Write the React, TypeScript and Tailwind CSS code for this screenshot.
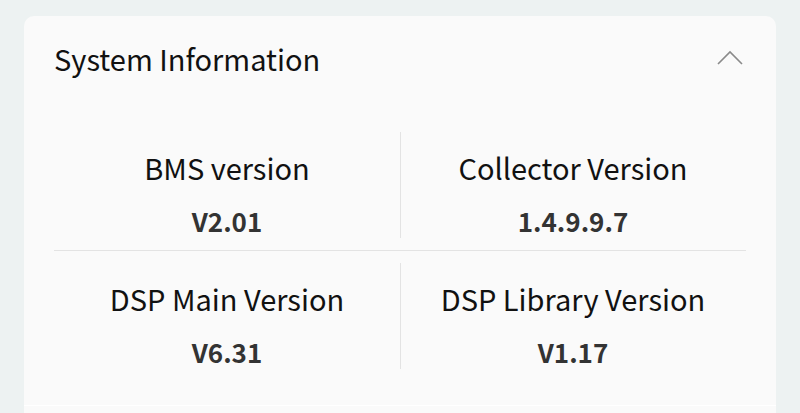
import React from 'react'

const items = [
  { label: 'BMS version', value: 'V2.01' },
  { label: 'Collector Version', value: '1.4.9.9.7' },
  { label: 'DSP Main Version', value: 'V6.31' },
  { label: 'DSP Library Version', value: 'V1.17' },
]

function InfoCell({ label, value, divider }: { label: string; value: string; divider?: boolean }) {
  return (
    <div className="relative flex-1 flex flex-col items-center h-[106px] pt-[21px]">
      {divider && <div className="absolute left-0 top-0 bottom-0 w-px bg-[#e3e3e3]"></div>}
      <span className="text-[29px] leading-none text-[#111]">{label}</span>
      <span className="mt-[26px] text-[26px] leading-none font-bold text-[#333]">{value}</span>
    </div>
  )
}

function App() {
  const rows = [items.slice(0, 2), items.slice(2, 4)]
  return (
    <div
      className="h-[413px] overflow-hidden bg-[#edf2f2] pt-4 px-6"
      style={{ fontFamily: '"Noto Sans CJK SC", "Noto Sans", sans-serif' }}
    >
      <div className="bg-[#fafafa] rounded-[10px]">
        {/* Header */}
        <div className="flex items-center justify-between h-[84px] px-[30px]">
          <h2 className="text-[29px] leading-none text-[#111]">System Information</h2>
          <svg width="26" height="16" viewBox="0 0 26 16" className="mr-[3px]" fill="none">
            <path d="M1 14 L13 2 L25 14" stroke="#8a8a8a" strokeWidth="1.6" />
          </svg>
        </div>

        {/* Version grid */}
        <div className="px-[30px] pt-5 pb-6">
          {rows.map((row, i) => (
            <div key={i} className={i > 0 ? 'border-t border-[#e3e3e3] py-3' : 'py-3'}>
              <div className="flex">
                <InfoCell label={row[0].label} value={row[0].value} />
                <InfoCell label={row[1].label} value={row[1].value} divider />
              </div>
            </div>
          ))}
        </div>

        {/* Next section (cut off) */}
        <div className="border-t border-white h-20"></div>
      </div>
    </div>
  )
}

export default App
